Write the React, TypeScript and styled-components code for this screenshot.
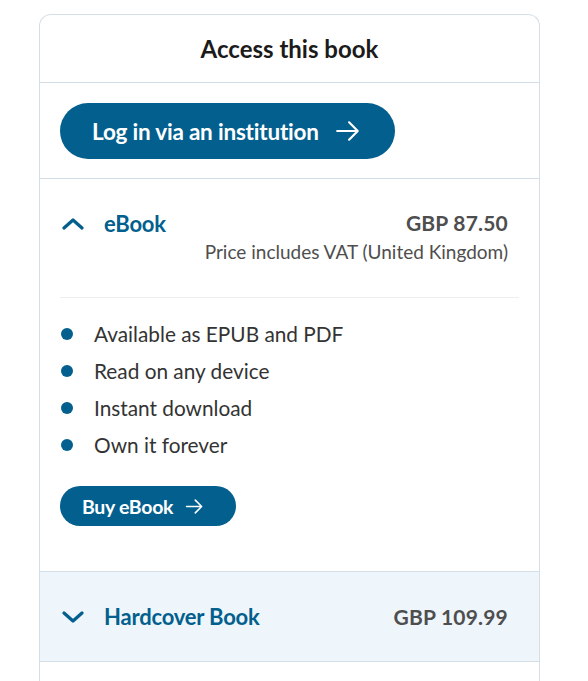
import * as React from "react";
import styled, { createGlobalStyle } from "styled-components";

const Global = createGlobalStyle`
    body {
        margin: 0;
        background: #fff;
        font-family: Lato, "Open Sans", sans-serif;
    }
`;

const Card = styled.section`
    margin: 14px 0 0 39px;
    width: 501px;
    border: 1px solid #d3dee6;
    border-bottom: none;
    border-radius: 12px 12px 0 0;
    box-sizing: border-box;
`;

const Title = styled.h2`
    margin: 0;
    height: 67px;
    display: flex;
    align-items: center;
    justify-content: center;
    font-size: 24px;
    font-weight: 700;
    color: #1b1b1b;
    border-bottom: 1px solid #d3dee6;
`;

const LoginArea = styled.div`
    padding: 20px 20px 19px;
    border-bottom: 1px solid #d3dee6;
`;

const PillButton = styled.button<{ $big?: boolean }>`
    display: inline-flex;
    align-items: center;
    gap: ${p => (p.$big ? "16px" : "12px")};
    height: ${p => (p.$big ? "56px" : "40px")};
    padding: ${p => (p.$big ? "0 34px 0 32px" : "0 32px 0 22px")};
    border: none;
    border-radius: 999px;
    background: #035f8d;
    color: #fff;
    font-family: inherit;
    font-size: ${p => (p.$big ? "22.5px" : "19.5px")};
    font-weight: 700;
    letter-spacing: ${p => (p.$big ? "-0.2px" : "-0.3px")};
    cursor: pointer;
`;

const Option = styled.div<{ $shaded?: boolean }>`
    background: ${p => (p.$shaded ? "#eef5fb" : "#fff")};
    border-bottom: 1px solid #d3dee6;
    padding: 0 20px;
`;

const OptionHead = styled.div<{ $tall?: boolean }>`
    display: flex;
    justify-content: space-between;
    align-items: ${p => (p.$tall ? "flex-start" : "center")};
    height: ${p => (p.$tall ? "118px" : "89px")};
    padding: ${p => (p.$tall ? "31px 11px 0 2px" : "0 11px 0 2px")};
    box-sizing: border-box;
`;

const Toggle = styled.div`
    display: flex;
    align-items: center;
    gap: 20px;
    color: #035f8d;
    font-size: 22px;
    font-weight: 700;
    letter-spacing: -0.2px;
`;

const PriceBox = styled.div`
    text-align: right;
`;

const Price = styled.div`
    font-size: 21px;
    font-weight: 700;
    color: #4e4e4e;
    letter-spacing: 0.2px;
`;

const Vat = styled.div`
    margin-top: 5px;
    font-size: 19px;
    color: #4e4e4e;
`;

const Body = styled.div`
    border-top: 1px solid #eceeef;
    padding: 17px 0 45px;
`;

const Features = styled.ul`
    list-style: none;
    margin: 0 0 23px;
    padding: 0;
`;

const Feature = styled.li`
    display: flex;
    align-items: center;
    height: 37px;
    font-size: 20.8px;
    color: #333;

    &:before {
        content: "";
        width: 12px;
        height: 12px;
        border-radius: 50%;
        background: #035f8d;
        margin: 0 21px 0 1px;
    }
`;

const Arrow = ({ size }: { size: number }) => (
    <svg width={size} height={size} viewBox="0 0 24 24" fill="none"
        stroke="currentColor" strokeWidth="2" strokeLinecap="round" strokeLinejoin="round">
        <path d="M2 12h19M13 4l8 8-8 8" />
    </svg>
);

const Chevron = ({ up }: { up?: boolean }) => (
    <svg width="22" height="14" viewBox="0 0 22 14" fill="none"
        stroke="#035f8d" strokeWidth="3.2" strokeLinecap="round" strokeLinejoin="round">
        <path d={up ? "M2 11l9-8 9 8" : "M2 3l9 8 9-8"} />
    </svg>
);

const features = [
    "Available as EPUB and PDF",
    "Read on any device",
    "Instant download",
    "Own it forever",
];

const App = () => (
    <>
        <Global />
        <Card>
            <Title>Access this book</Title>
            <LoginArea>
                <PillButton $big>
                    Log in via an institution <Arrow size={26} />
                </PillButton>
            </LoginArea>
            <Option>
                <OptionHead $tall>
                    <Toggle><Chevron up /> eBook</Toggle>
                    <PriceBox>
                        <Price>GBP 87.50</Price>
                        <Vat>Price includes VAT (United Kingdom)</Vat>
                    </PriceBox>
                </OptionHead>
                <Body>
                    <Features>
                        {features.map(f => <Feature key={f}>{f}</Feature>)}
                    </Features>
                    <PillButton>
                        Buy eBook <Arrow size={19} />
                    </PillButton>
                </Body>
            </Option>
            <Option $shaded>
                <OptionHead>
                    <Toggle><Chevron /> Hardcover Book</Toggle>
                    <Price>GBP 109.99</Price>
                </OptionHead>
            </Option>
            <Option>
                <OptionHead />
            </Option>
        </Card>
    </>
);

export default App;
